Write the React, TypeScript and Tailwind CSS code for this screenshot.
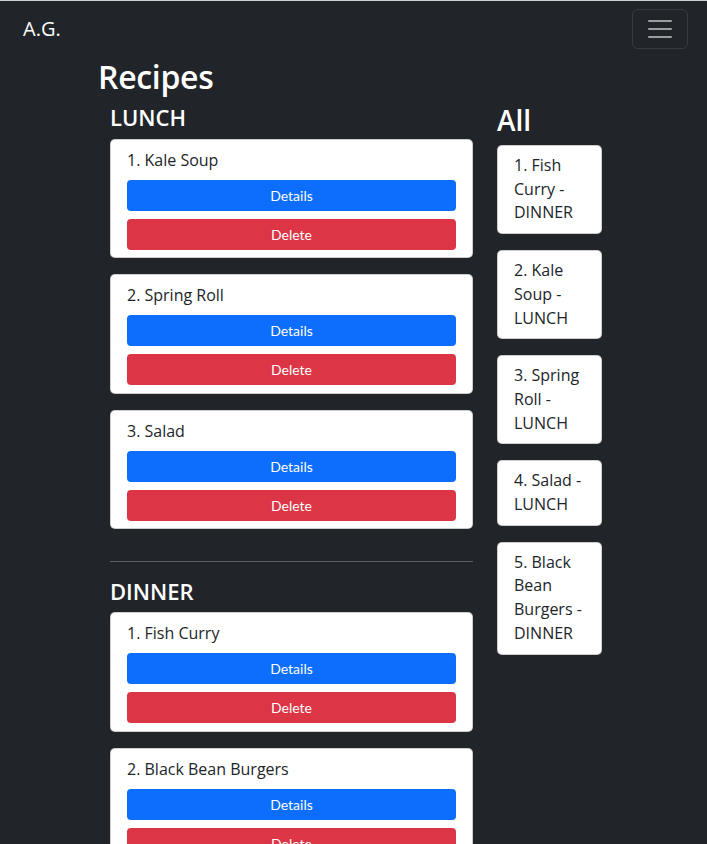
const lunch = ["Kale Soup", "Spring Roll", "Salad"];
const dinner = ["Fish Curry", "Black Bean Burgers"];
const all = [
  "1. Fish Curry - DINNER",
  "2. Kale Soup - LUNCH",
  "3. Spring Roll - LUNCH",
  "4. Salad - LUNCH",
  "5. Black Bean Burgers - DINNER",
];

function RecipeCard({ index, name }: { index: number; name: string }) {
  return (
    <div className="mb-4 rounded-[5px] border border-black/20 bg-white px-4 pt-2 pb-[7.4px]">
      <div className="text-[16px] leading-6 text-[#212529]">
        {index}. {name}
      </div>
      <button className="mt-2 flex h-[31px] w-full items-center justify-center rounded-[4px] bg-[#0d6efd] font-['Lato',sans-serif] text-[14px] text-white">
        Details
      </button>
      <button className="mt-2 flex h-[31px] w-full items-center justify-center rounded-[4px] bg-[#dc3545] font-['Lato',sans-serif] text-[14px] text-white">
        Delete
      </button>
    </div>
  );
}

function Section({ title, items }: { title: string; items: string[] }) {
  return (
    <div>
      <h4 className="mb-2 text-[22px] leading-[1.2] font-semibold text-white">{title}</h4>
      {items.map((name, i) => (
        <RecipeCard key={name} index={i + 1} name={name} />
      ))}
    </div>
  );
}

export default function App() {
  return (
    <div className="min-h-screen border-t border-[#cfd0d2] bg-[#212529] font-['Open_Sans',sans-serif]">
      {/* navbar */}
      <nav className="flex h-[56px] items-center justify-between pr-[19px] pl-[23px]">
        <span className="text-[20px] leading-[30px] text-white">A.G.</span>
        <button className="flex h-[40px] w-[56px] items-center justify-center rounded-[6px] border border-white/10">
          <svg width="30" height="30" viewBox="0 0 30 30" fill="none">
            <path
              d="M4 7h22M4 15h22M4 23h22"
              stroke="rgba(255,255,255,0.55)"
              strokeWidth="2"
              strokeLinecap="round"
            />
          </svg>
        </button>
      </nav>

      <main className="pt-px pl-[98px]">
        <h1 className="mb-2 text-[32px] leading-[1.2] font-semibold tracking-[-0.3px] text-white">Recipes</h1>
        <div className="flex gap-6 pl-3">
          <div className="w-[363px]">
            <Section title="LUNCH" items={lunch} />
            <hr className="mt-8 mb-4 border-t border-[#5b5e62]" />
            <Section title="DINNER" items={dinner} />
          </div>
          <div className="w-[105px]">
            <h2 className="mb-[7px] text-[28px] leading-[1.2] font-semibold text-white">All</h2>
            {all.map((t) => (
              <div
                key={t}
                className="mb-4 rounded-[5px] border border-black/20 bg-white px-4 py-2 text-[16px] leading-[23.7px] text-[#212529]"
              >
                {t}
              </div>
            ))}
          </div>
        </div>
      </main>
    </div>
  );
}
